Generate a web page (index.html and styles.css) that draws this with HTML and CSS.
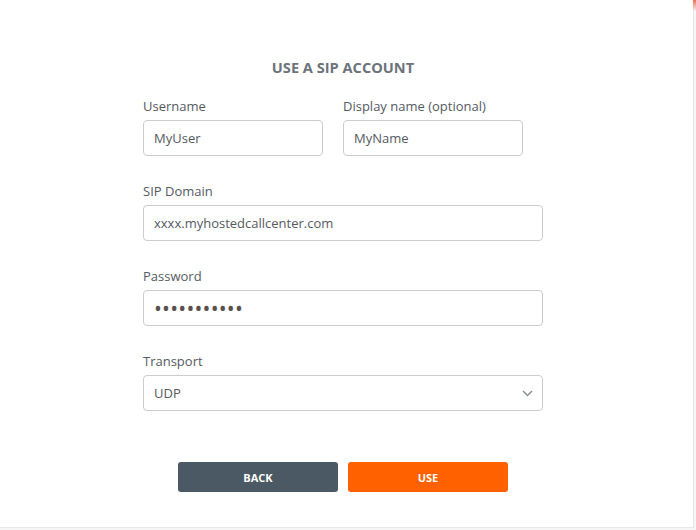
FILE: index.html
```html
<!DOCTYPE html>
<html>
<head>
<meta charset="utf-8">
<link rel="stylesheet" href="styles.css">
</head>
<body>
<div class="panel">
  <div class="accent"></div>
  <div class="content">
    <h1 class="title">USE A SIP ACCOUNT</h1>
    <form class="form">
      <div class="row">
        <div class="field half">
          <label class="label">Username</label>
          <input class="input" type="text" value="MyUser">
        </div>
        <div class="field half">
          <label class="label">Display name (optional)</label>
          <input class="input" type="text" value="MyName">
        </div>
      </div>
      <div class="field">
        <label class="label">SIP Domain</label>
        <input class="input" type="text" value="xxxx.myhostedcallcenter.com">
      </div>
      <div class="field">
        <label class="label">Password</label>
        <input class="input password" type="password" value="secretpassw">
      </div>
      <div class="field">
        <label class="label">Transport</label>
        <div class="select">
          <span>UDP</span>
          <svg class="chevron" width="11" height="7" viewBox="0 0 11 7"><path d="M1 1 L5.5 5.5 L10 1" fill="none" stroke="#8a8f94" stroke-width="1.5"/></svg>
        </div>
      </div>
      <div class="actions">
        <button type="button" class="btn back">BACK</button>
        <button type="button" class="btn use">USE</button>
      </div>
    </form>
  </div>
</div>
</body>
</html>
```

FILE: styles.css
```css
html, body {
  margin: 0;
  padding: 0;
  background: #f6f6f6;
}
body {
  font-family: "Open Sans", "Noto Sans", sans-serif;
  width: 696px;
  height: 530px;
  overflow: hidden;
}
.panel {
  position: relative;
  box-sizing: border-box;
  width: 694px;
  height: 528px;
  background: #ffffff;
  border-right: 1px solid #e4e4e4;
  border-bottom: 1px solid #e8e8e8;
  padding-right: 8px;
}
.accent {
  position: absolute;
  right: -3px;
  top: 0;
  width: 3px;
  height: 11px;
  background: linear-gradient(#f07050, rgba(240,112,80,0));
}
.content {
  width: 686px;
  padding-top: 57px;
}
.title {
  margin: 0;
  font-size: 14.6px;
  line-height: 20px;
  font-weight: 700;
  color: #6b737b;
  text-align: center;
}
.form {
  width: 400px;
  margin: 20px auto 0;
}
.row {
  display: flex;
  gap: 20px;
}
.field {
  display: flex;
  flex-direction: column;
  margin-bottom: 26px;
}
.half {
  width: 180px;
}
.label {
  font-size: 13px;
  line-height: 18px;
  color: #555a5f;
  margin-bottom: 5px;
}
.input, .select {
  box-sizing: border-box;
  height: 36px;
  width: 100%;
  border: 1px solid #cccccc;
  border-radius: 4px;
  padding: 0 10px;
  font-family: "Open Sans", "Noto Sans", sans-serif;
  font-size: 13px;
  color: #555a5f;
  background: #fff;
  outline: none;
}
.password {
  font-size: 21px;
  letter-spacing: 0.2px;
  color: #5a5050;
}
.select {
  display: flex;
  align-items: center;
  justify-content: space-between;
  padding-right: 9px;
}
.actions {
  display: flex;
  justify-content: center;
  gap: 10px;
  margin-top: 51px;
}
.btn {
  width: 160px;
  height: 30px;
  border: none;
  border-radius: 3px;
  color: #fff;
  font-family: "Open Sans", "Noto Sans", sans-serif;
  font-weight: 700;
  font-size: 11px;
  padding: 0;
}
.back {
  background: #4a5964;
}
.use {
  background: #ff6000;
}
```
